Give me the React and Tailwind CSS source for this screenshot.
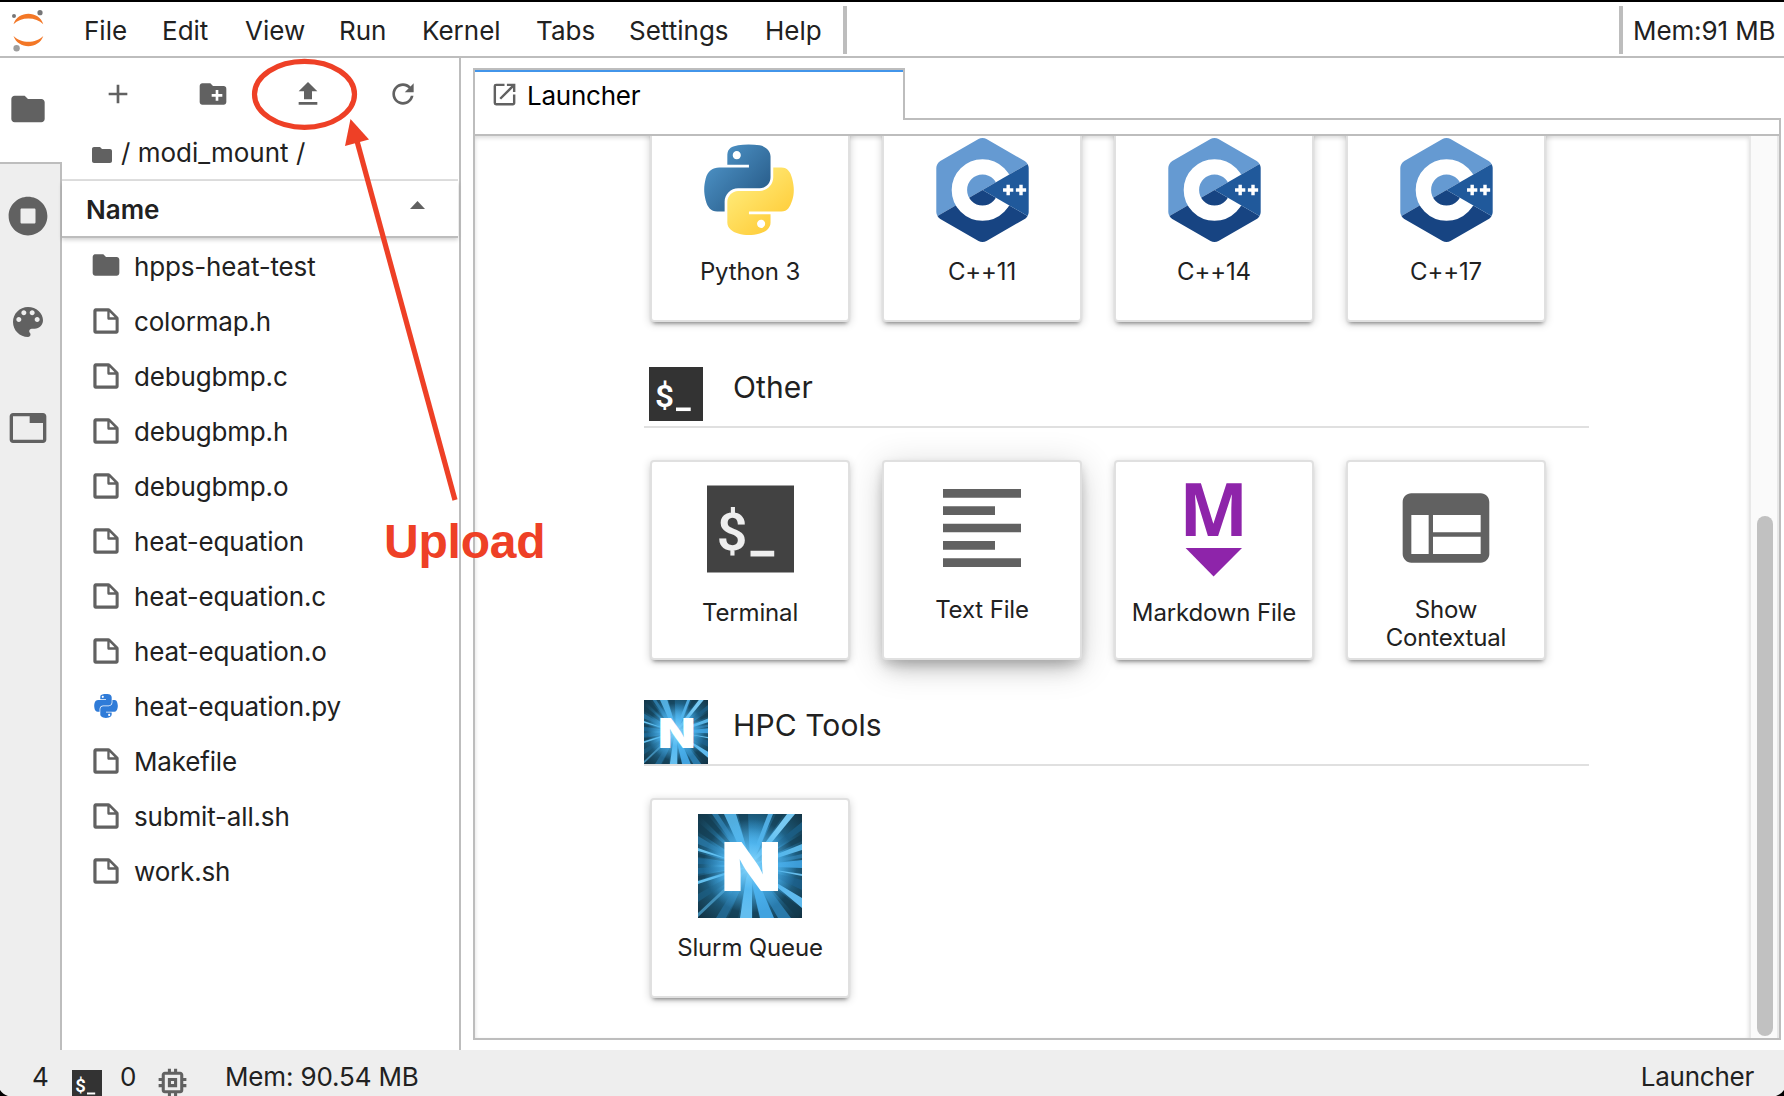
import React from "react";

const FOLDER = "M10 4H4c-1.1 0-1.99.9-1.99 2L2 18c0 1.1.9 2 2 2h16c1.1 0 2-.9 2-2V8c0-1.1-.9-2-2-2h-8l-2-2z";
const NEW_FOLDER = "M20 6h-8l-2-2H4c-1.11 0-1.99.89-1.99 2L2 18c0 1.11.89 2 2 2h16c1.11 0 2-.89 2-2V8c0-1.11-.89-2-2-2zm-1 8h-3v3h-2v-3h-3v-2h3V9h2v3h3v2z";
const PLUS = "M19 13h-6v6h-2v-6H5v-2h6V5h2v6h6v2z";
const UPLOAD = "M9 16h6v-6h4l-7-7-7 7h4zm-4 2h14v2H5z";
const REFRESH = "M9 13.5c-2.49 0-4.5-2.01-4.5-4.5S6.51 4.5 9 4.5c1.24 0 2.36.52 3.17 1.33L10 8h5V3l-1.76 1.76C12.15 3.68 10.66 3 9 3 5.69 3 3.01 5.69 3.01 9S5.69 15 9 15c2.97 0 5.43-2.16 5.9-5h-1.52c-.46 2-2.24 3.5-4.38 3.5z";
const STOP = "M256 8C119 8 8 119 8 256s111 248 248 248 248-111 248-248S393 8 256 8zm96 328c0 8.8-7.2 16-16 16H176c-8.8 0-16-7.2-16-16V176c0-8.8 7.2-16 16-16h160c8.8 0 16 7.2 16 16v160z";
const PALETTE = "M12 3c-4.97 0-9 4.03-9 9s4.03 9 9 9c.83 0 1.5-.67 1.5-1.5 0-.39-.15-.74-.39-1.01-.23-.26-.38-.61-.38-.99 0-.83.67-1.5 1.5-1.5H16c2.76 0 5-2.24 5-5 0-4.42-4.03-8-9-8zm-5.5 9c-.83 0-1.5-.67-1.5-1.5S5.67 9 6.5 9 8 9.67 8 10.5 7.33 12 6.5 12zm3-4C8.67 8 8 7.33 8 6.5S8.67 5 9.5 5s1.5.67 1.5 1.5S10.33 8 9.5 8zm5 0c-.83 0-1.5-.67-1.5-1.5S13.67 5 14.5 5s1.5.67 1.5 1.5S15.33 8 14.5 8zm3 4c-.83 0-1.5-.67-1.5-1.5S16.67 9 17.5 9s1.5.67 1.5 1.5-.67 1.5-1.5 1.5z";
const TAB = "M21 3H3c-1.1 0-2 .9-2 2v14c0 1.1.9 2 2 2h18c1.1 0 2-.9 2-2V5c0-1.1-.9-2-2-2zm0 16H3V5h10v4h8v10z";
const LAUNCH = "M19 19H5V5h7V3H5a2 2 0 00-2 2v14a2 2 0 002 2h14c1.1 0 2-.9 2-2v-7h-2v7zM14 3v2h3.59l-9.83 9.83 1.41 1.41L19 6.41V10h2V3h-7z";
const FILE = "M19.3 8.2l-5.5-5.5c-.3-.3-.7-.5-1.2-.5H3.9c-.8.1-1.6.9-1.6 1.8v14.1c0 .9.7 1.6 1.6 1.6h14.2c.9 0 1.6-.7 1.6-1.6V9.4c.1-.5-.1-.9-.4-1.2zm-5.8-3.3l3.4 3.6h-3.4V4.9zm3.9 12.7H4.7c-.1 0-.2 0-.2-.2V4.7c0-.2.1-.3.2-.3h7.2v4.4s0 .8.3 1.1c.3.3 1.1.3 1.1.3h4.3v7.2s-.1.2-.2.2z";
const TEXT_LINES = "M15 15H3v2h12v-2zm0-8H3v2h12V7zM3 13h18v-2H3v2zm0 8h18v-2H3v2zM3 3v2h18V3H3z";
const INSPECTOR = "M4 4h16c1.1 0 1.99.9 1.99 2L22 18c0 1.1-.9 2-2 2H4c-1.1 0-2-.9-2-2V6c0-1.1.9-2 2-2zm5 14h11v-4H9v4zm0-5h11V9H9v4zm-5 5h4V9H4v9z";
const CHIP = "M15 9H9v6h6V9zm-2 4h-2v-2h2v2zm8-2V9h-2V7c0-1.1-.9-2-2-2h-2V3h-2v2h-2V3H9v2H7c-1.1 0-2 .9-2 2v2H3v2h2v2H3v2h2v2c0 1.1.9 2 2 2h2v2h2v-2h2v2h2v-2h2c1.1 0 2-.9 2-2v-2h2v-2h-2v-2h2zm-4 6H7V7h10v10z";
const PY_TOP = "M63.391 1.988c-4.222.02-8.252.379-11.8 1.007-10.45 1.846-12.346 5.71-12.346 12.837v9.411h24.693v3.137H29.977c-7.176 0-13.46 4.313-15.426 12.521-2.268 9.405-2.368 15.275 0 25.096 1.755 7.311 5.947 12.519 13.124 12.519h8.491V67.234c0-8.151 7.051-15.34 15.426-15.34h24.665c6.866 0 12.346-5.654 12.346-12.548V15.833c0-6.693-5.646-11.72-12.346-12.837-4.244-.706-8.645-1.027-12.866-1.008zM50.037 9.557c2.55 0 4.634 2.117 4.634 4.721 0 2.593-2.083 4.69-4.634 4.69-2.56 0-4.633-2.097-4.633-4.69-.001-2.604 2.073-4.721 4.633-4.721z";
const PY_BOTTOM = "M91.682 28.38v10.966c0 8.5-7.208 15.655-15.426 15.655H51.591c-6.756 0-12.346 5.783-12.346 12.549v23.515c0 6.691 5.818 10.628 12.346 12.547 7.816 2.297 15.312 2.713 24.665 0 6.216-1.801 12.346-5.423 12.346-12.547v-9.412H63.938v-3.138h37.012c7.176 0 9.852-5.005 12.348-12.519 2.578-7.735 2.467-15.174 0-25.096-1.774-7.145-5.161-12.521-12.348-12.521h-9.268zM77.809 87.927c2.561 0 4.634 2.097 4.634 4.692 0 2.602-2.074 4.719-4.634 4.719-2.55 0-4.633-2.117-4.633-4.719 0-2.595 2.083-4.692 4.633-4.692z";

function Icon({ d, box = 24, className }) {
  return (
    <svg viewBox={`0 0 ${box} ${box}`} className={`block shrink-0 fill-[#616161] ${className}`}>
      <path d={d} fillRule="evenodd" />
    </svg>
  );
}

function JupyterLogo() {
  return (
    <svg viewBox="0 0 60 54" className="block h-[54px] w-[60px] shrink-0">
      <path d="M13.5 22.2C18 8.4 38.8 8.4 43.3 22.2C36 14.6 20.8 14.6 13.5 22.2Z" fill="#f37726" />
      <path d="M13.5 34C18 47.5 38.8 47.5 43.3 34C36 41.7 20.8 41.7 13.5 34Z" fill="#f37726" />
      <circle cx="14" cy="14" r="2" fill="#767677" />
      <circle cx="40" cy="10.7" r="2.6" fill="#767677" />
      <circle cx="16.6" cy="46.3" r="3.2" fill="#9e9e9e" />
    </svg>
  );
}

function PythonLogo() {
  return (
    <svg viewBox="12.6 1.9 102.8 104.2" className="mr-0.5 block h-[92px] w-[90px]">
      <defs>
        <linearGradient id="pyBlue" x1="0.1" y1="0.1" x2="0.8" y2="0.75">
          <stop offset="0" stopColor="#4f95c9" />
          <stop offset="1" stopColor="#2c6290" />
        </linearGradient>
        <linearGradient id="pyYellow" x1="0.2" y1="0.25" x2="0.7" y2="0.85">
          <stop offset="0" stopColor="#ffe873" />
          <stop offset="1" stopColor="#ffcf3e" />
        </linearGradient>
      </defs>
      <path d={PY_TOP} fill="url(#pyBlue)" />
      <path d={PY_BOTTOM} fill="url(#pyYellow)" />
    </svg>
  );
}

function CppLogo() {
  return (
    <svg viewBox="0 0 306 344.35" className="block h-[104px] w-[93px]">
      <path d="M302.108 86.087c-2.402-4.16-5.715-7.793-9.358-9.897L166.25 3.156c-7.287-4.208-19.213-4.208-26.5 0L13.25 76.19C5.962 80.397 0 90.725 0 99.14v146.069c0 4.208 1.491 8.894 3.893 13.053L153 172.175l149.108-86.088z" fill="#659ad2" />
      <path d="M166.25 341.193l126.5-73.034c3.644-2.104 6.956-5.737 9.357-9.897L153 172.175 3.893 258.263c2.401 4.159 5.714 7.793 9.357 9.896l126.5 73.034c7.287 4.208 19.213 4.208 26.5 0z" fill="#174482" />
      <circle cx="153" cy="172.175" r="76.5" fill="none" stroke="#fff" strokeWidth="51" />
      <path d="M302.107 258.262c2.401-4.159 3.893-8.845 3.893-13.053V99.14c0-4.208-1.49-8.893-3.892-13.052L153 172.175l149.107 86.087z" fill="#20599b" />
      <path d="M221 172.2h34M238 155.2v34M263.5 172.2h34M280.5 155.2v34" stroke="#fff" strokeWidth="11.3" />
    </svg>
  );
}

function TerminalIcon({ className, back, ink = "#eeeeee" }) {
  return (
    <svg viewBox="0 0 88 88" className={`block shrink-0 overflow-visible ${className}`}>
      <rect width="88" height="88" fill={back} />
      <text x="9.8" y="65" textLength="31" lengthAdjust="spacingAndGlyphs" fill={ink} className="font-['Roboto',sans-serif] text-[52px] font-semibold">$</text>
      <rect x="44" y="66" width="24" height="5.8" fill={ink} />
    </svg>
  );
}

function MarkdownIcon() {
  return (
    <svg viewBox="0 0 104 104" className="block size-[104px] overflow-visible">
      <text x="17.2" y="60.3" textLength="69" lengthAdjust="spacingAndGlyphs" fill="#8e24aa" className="font-['Noto_Sans',sans-serif] text-[73px] font-bold">M</text>
      <path d="M23.6 72h56.4l-28.4 28.4z" fill="#8e24aa" />
    </svg>
  );
}

/* Light beams: two points on the rim of the square, fanning from its centre. */
const BEAMS = [
  ["14,0 20,0", "#3183b4", 0.8],
  ["26,0 38,0", "#5cbcf0", 0.85],
  ["70,0 75,0", "#55b4ea", 0.9],
  ["89,0 97,0", "#7cd0fa", 0.95],
  ["104,8 104,16", "#1c5f87", 0.8],
  ["104,30 104,36", "#62c0f2", 0.9],
  ["104,40 104,44", "#2f80b0", 0.8],
  ["104,46 104,54", "#3fa0dc", 0.95],
  ["104,60 104,62", "#6fc8f6", 0.9],
  ["104,66 104,76", "#1c6290", 0.7],
  ["104,84 104,94", "#62c0f4", 0.95],
  ["80,104 93,104", "#2c7fb2", 0.9],
  ["62,104 76,104", "#44a8e6", 0.95],
  ["42,104 54,104", "#68c4f6", 0.95],
  ["18,104 28,104", "#246d98", 0.8],
  ["0,99 0,103", "#4a9cc8", 0.8],
  ["0,80 0,88", "#1d5f84", 0.7],
  ["0,67 0,70", "#66c4f2", 0.95],
  ["0,54 0,60", "#1e6a98", 0.8],
  ["0,44 0,50", "#1e6a98", 0.7],
  ["0,34 0,37", "#6cc8f6", 0.95],
  ["0,22 0,30", "#2a7aa8", 0.75],
];
const SHADES = ["40,0 50,0", "78,0 86,0", "104,20 104,27", "55,104 61,104", "30,104 40,104", "104,96 100,104", "0,8 0,18", "0,39 0,43", "0,62 0,66", "0,0 9,0"];

function BurstLogo({ className, id }) {
  return (
    <svg viewBox="0 0 104 104" className={`block shrink-0 ${className}`}>
      <defs>
        <radialGradient id={`${id}Back`} cx="0.5" cy="0.48" r="0.7">
          <stop offset="0.25" stopColor="#4fb2ea" />
          <stop offset="0.5" stopColor="#23729f" />
          <stop offset="0.75" stopColor="#194e69" />
          <stop offset="1" stopColor="#123344" />
        </radialGradient>
        <radialGradient id={`${id}Glow`} cx="0.5" cy="0.5" r="0.45">
          <stop offset="0" stopColor="#8fdcff" stopOpacity="1" />
          <stop offset="0.5" stopColor="#4fb6f0" stopOpacity="0.75" />
          <stop offset="1" stopColor="#4fb6f0" stopOpacity="0" />
        </radialGradient>
      </defs>
      <rect width="104" height="104" fill={`url(#${id}Back)`} />
      {SHADES.map((p) => (
        <polygon key={p} points={`${p} 52,52`} fill="#123a4e" opacity="0.65" />
      ))}
      {BEAMS.map(([p, fill, opacity]) => (
        <polygon key={p} points={`${p} 54,52 50,52`} fill={fill} opacity={opacity} />
      ))}
      <rect width="104" height="104" fill={`url(#${id}Glow)`} />
      <text x="22.8" y="77.3" textLength="61" lengthAdjust="spacingAndGlyphs" fill="#fff" className="font-['Inter',sans-serif] text-[67px] font-black">N</text>
    </svg>
  );
}

const MENUS = [
  ["File", "w-[78px]"],
  ["Edit", "w-[83px]"],
  ["View", "w-[94px]"],
  ["Run", "w-[83px]"],
  ["Kernel", "w-[114px]"],
  ["Tabs", "w-[93px]"],
  ["Settings", "w-[136px]"],
  ["Help", "w-[78px]"],
];

const FILES = ["hpps-heat-test", "colormap.h", "debugbmp.c", "debugbmp.h", "debugbmp.o", "heat-equation", "heat-equation.c", "heat-equation.o", "heat-equation.py", "Makefile", "submit-all.sh", "work.sh"];

function FileIcon({ name }) {
  if (name === "hpps-heat-test") return <Icon d={FOLDER} className="size-8 -translate-y-px" />;
  if (name.endsWith(".py")) {
    return (
      <svg viewBox="12 2 104 104" className="mx-1 block size-6 shrink-0 fill-[#2f7bd8]">
        <path d={PY_TOP} />
        <path d={PY_BOTTOM} />
      </svg>
    );
  }
  return <Icon d={FILE} box={22} className="size-8" />;
}

function Card({ icon, label, raised, gap = "mt-4" }) {
  return (
    <div className={`flex size-[200px] shrink-0 flex-col items-center rounded border-2 border-[#e0e0e0] bg-white pt-[14px] ${raised ? "shadow-[0_12px_18px_-6px_rgba(0,0,0,0.22),0_6px_36px_0_rgba(0,0,0,0.16),0_4px_10px_rgba(0,0,0,0.12)]" : "shadow-[0_4px_4px_-3px_rgba(0,0,0,0.45),0_2px_8px_0_rgba(0,0,0,0.18)]"}`}>
      <div className="flex h-[104px] shrink-0 items-center justify-center">{icon}</div>
      <div className={`text-center text-[24px] leading-[28px] tracking-[-0.15px] text-[#212121] ${gap}`}>{label}</div>
    </div>
  );
}

function SectionHead({ icon, label }) {
  return (
    <div className="flex h-[66px] items-start border-b-2 border-[#e0e0e0]">
      <div className="flex size-16 items-center justify-center">{icon}</div>
      <div className="pt-[5px] pl-[25px] text-[30px] leading-[40px] tracking-[0.1px] text-[#212121]">{label}</div>
    </div>
  );
}

export default function App() {
  return (
    <div className="relative flex h-[1096px] w-[1784px] flex-col overflow-hidden border-t-2 border-black bg-white font-['Inter',sans-serif] text-[26px] leading-[32px] text-[#212121]">
      <header className="flex h-[56px] shrink-0 border-b-2 border-[#bdbdbd]">
        <JupyterLogo />
        <nav className="flex pt-[13px] pl-6">
          {MENUS.map(([m, w]) => (
            <span key={m} className={w}>{m}</span>
          ))}
        </nav>
        <div className="mt-1 h-12 w-1 bg-[#bdbdbd]" />
        <div className="mt-1 ml-auto h-12 w-1 bg-[#bdbdbd]" />
        <span className="w-[161px] pt-[13px] pl-[10px] tracking-[-0.1px] whitespace-nowrap">Mem:91 MB</span>
      </header>

      <main className="flex h-[992px] shrink-0">
        <aside className="flex w-[62px] shrink-0 flex-col">
          <div className="flex h-[104px] justify-center pt-[31px] pr-[6px]">
            <Icon d={FOLDER} className="size-10" />
          </div>
          <div className="flex grow flex-col items-center border-t-2 border-r-2 border-[#bdbdbd] bg-[#eeeeee] pt-8 pr-1">
            <Icon d={STOP} box={512} className="size-10" />
            <Icon d={PALETTE} className="mt-[66px] size-10" />
            <Icon d={TAB} className="mt-[66px] size-10" />
          </div>
        </aside>

        <section className="flex w-[399px] shrink-0 flex-col border-r-2 border-[#bdbdbd]">
          <div className="mr-px flex h-[72px] shrink-0 items-center gap-[63px] pl-10">
            <Icon d={PLUS} className="size-8" />
            <Icon d={NEW_FOLDER} className="size-8" />
            <Icon d={UPLOAD} className="size-8" />
            <Icon d={REFRESH} box={18} className="size-8" />
          </div>
          <div className="mr-px flex h-[51px] shrink-0 items-start border-b-2 border-[#e0e0e0] pt-[7px] pl-[28px]">
            <Icon d={FOLDER} className="mt-[6px] size-6" />
            <span className="ml-[7px] whitespace-pre">/ modi_mount /</span>
          </div>
          <div className="mr-px flex h-[57px] shrink-0 items-start justify-between border-b-2 border-[#bdbdbd] pt-[13px] pr-[33px] pl-6 shadow-[0_2px_4px_rgba(0,0,0,0.18)]">
            <span className="font-semibold">Name</span>
            <svg viewBox="0 0 15 8" className="mt-[7px] block h-2 w-[15px] fill-[#616161]">
              <path d="M0 8L7.5 0L15 8Z" />
            </svg>
          </div>
          <ul>
            {FILES.map((f) => (
              <li key={f} className="flex h-[55px] items-center pl-[28px]">
                <FileIcon name={f} />
                <span className="pt-[2px] pl-3 tracking-[-0.17px]">{f}</span>
              </li>
            ))}
          </ul>
        </section>

        <section className="flex grow flex-col pt-[10px] pr-[3px] pb-[10px] pl-3">
          <div className="flex h-[52px] shrink-0">
            <div className="flex w-[432px] items-start border-t-2 border-r-2 border-l-2 border-[#bdbdbd]">
              <div className="flex grow items-start border-t-2 border-[#4295ea] pt-2 pl-[15px]">
                <Icon d={LAUNCH} className="size-[29px]" />
                <span className="pl-2 tracking-[-0.25px] text-black">Launcher</span>
              </div>
            </div>
            <div className="mt-auto h-[2px] grow bg-[#bdbdbd]" />
          </div>
          <div className="-mt-[2px] flex grow flex-col border-r-2 border-b-2 border-l-2 border-[#bdbdbd]">
            <div className="h-[18px] shrink-0 border-b-2 border-[#bdbdbd]" />
            <div className="flex h-[902px] grow overflow-hidden">
              <div className="flex grow flex-col overflow-hidden pl-[169px] shadow-[inset_0_2px_4px_rgba(0,0,0,0.14)]">
                <div className="-mt-[14px] flex shrink-0 gap-8 pl-[6px]">
                  <Card icon={<PythonLogo />} label="Python 3" />
                  <Card icon={<CppLogo />} label="C++11" />
                  <Card icon={<CppLogo />} label="C++14" />
                  <Card icon={<CppLogo />} label="C++17" />
                </div>
                <div className="mt-10 w-[945px] shrink-0">
                  <SectionHead label="Other" icon={<TerminalIcon back="#333333" ink="#ffffff" className="size-[54px]" />} />
                </div>
                <div className="mt-8 flex shrink-0 gap-8 pl-[6px]">
                  <Card icon={<TerminalIcon back="#424242" className="size-[87px] translate-y-[0.5px]" />} label="Terminal" gap="mt-[19px]" />
                  <Card raised icon={<Icon d={TEXT_LINES} className="size-[104px]" />} label="Text File" />
                  <Card icon={<MarkdownIcon />} label="Markdown File" gap="mt-[19px]" />
                  <Card icon={<Icon d={INSPECTOR} className="size-[104px]" />} label={<>Show<br />Contextual</>} />
                </div>
                <div className="mt-10 w-[945px] shrink-0">
                  <SectionHead label="HPC Tools" icon={<BurstLogo id="head" className="size-16" />} />
                </div>
                <div className="mt-8 flex shrink-0 pl-[6px]">
                  <Card icon={<BurstLogo id="card" className="size-[104px]" />} label="Slurm Queue" />
                </div>
              </div>
              <div className="flex w-[30px] shrink-0 flex-col items-center border-r-2 border-l-2 border-[#e8e8e8] bg-[#fafafa] pt-[380px] pb-[2px] pl-[2px]">
                <div className="w-4 grow rounded-full bg-[#c1c1c1]" />
              </div>
            </div>
          </div>
        </section>
      </main>

      <footer className="flex h-[46px] shrink-0 items-start bg-[#eeeeee] pt-[11px]">
        <span className="w-[72px] pl-8">4</span>
        <TerminalIcon back="#333333" ink="#ffffff" className="mt-[9px] size-[30px]" />
        <span className="w-[52px] pl-[18px]">0</span>
        <Icon d={CHIP} className="mt-[3px] size-[37px]" />
        <span className="pl-[34px] tracking-[-0.15px]">Mem: 90.54 MB</span>
        <span className="mr-[30px] ml-auto tracking-[-0.25px]">Launcher</span>
      </footer>

      {/* Rounded window corners */}
      <svg viewBox="0 0 8 6" className="absolute bottom-0 left-0 h-[6px] w-2">
        <path d="M0 0Q3 4.5 8 6H0Z" />
      </svg>
      <svg viewBox="0 0 8 6" className="absolute right-0 bottom-0 h-[6px] w-2">
        <path d="M8 0Q5 4.5 0 6H8Z" />
      </svg>

      {/* Red callout over the upload button */}
      <svg viewBox="240 50 240 460" className="absolute top-[48px] left-[240px] h-[460px] w-[240px]">
        <ellipse cx="304.500" cy="94.3" rx="50" ry="33" fill="none" stroke="#ee4026" strokeWidth="5.2" />
        <path d="M455 500L357 141" stroke="#ee4026" strokeWidth="5.200" />
        <path d="M350.5 119L345 146L369 139.5Z" fill="#ee4026" />
      </svg>
      <div className="absolute top-[512px] left-[384px] font-['Liberation_Sans',sans-serif] text-[48px] leading-[56px] font-bold tracking-[-0.2px] text-[#ee4026]">Upload</div>
    </div>
  );
}
